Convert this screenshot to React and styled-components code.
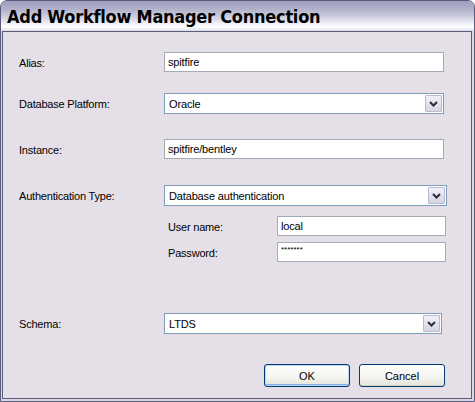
import styled, { createGlobalStyle } from "styled-components";

const colors = {
  frame: "#5b5b7b",
  body: "#e5e0e8",
  fieldBorder: "#a5acb5",
  selectBorder: "#7f9db9",
  buttonBorder: "#003c74",
};

const GlobalStyle = createGlobalStyle`
  html, body {
    margin: 0;
    padding: 0;
    background: #ffffff;
  }
  body {
    font-family: "Liberation Sans", Arial, sans-serif;
    font-size: 11px;
    color: #000;
  }
`;

function Chevron() {
  return (
    <svg width="9" height="6" viewBox="0 0 9 6">
      <path d="M1 1 L4.5 4.5 L8 1" fill="none" stroke="#2b2b3b" strokeWidth="2" />
    </svg>
  );
}

function Select({ value, $width }) {
  return (
    <SelectBox $width={$width}>
      <SelectValue>{value}</SelectValue>
      <DropButton>
        <Chevron />
      </DropButton>
    </SelectBox>
  );
}

export default function App() {
  return (
    <>
      <GlobalStyle />
      <Window>
        <TitleBar>Add Workflow Manager Connection</TitleBar>
        <Body>
          <Row $top={20}>
            <Label>Alias:</Label>
            <TextField $width={280}>spitfire</TextField>
          </Row>
          <Row $top={21}>
            <Label>Database Platform:</Label>
            <Select value="Oracle" $width={280} />
          </Row>
          <Row $top={25}>
            <Label>Instance:</Label>
            <TextField $width={280}>spitfire/bentley</TextField>
          </Row>
          <Row $top={26}>
            <Label>Authentication Type:</Label>
            <Select value="Database authentication" $width={283} />
          </Row>
          <SubRow $top={10}>
            <SubLabel>User name:</SubLabel>
            <TextField $width={169}>local</TextField>
          </SubRow>
          <SubRow $top={6}>
            <SubLabel>Password:</SubLabel>
            <TextField $width={169}>
              <Masked>*******</Masked>
            </TextField>
          </SubRow>
          <Row $top={51}>
            <Label>Schema:</Label>
            <Select value="LTDS" $width={278} />
          </Row>
          <ButtonBar>
            <Button $default>OK</Button>
            <Button>Cancel</Button>
          </ButtonBar>
        </Body>
      </Window>
    </>
  );
}

const Window = styled.div`
  box-sizing: border-box;
  width: 475px;
  height: 402px;
  display: flex;
  flex-direction: column;
  border: 1px solid ${colors.frame};
  border-radius: 7px 7px 0 0;
  background: #d9d7e4;
  overflow: hidden;
`;

const TitleBar = styled.div`
  height: 30px;
  flex: none;
  display: flex;
  align-items: center;
  padding: 1px 0 0 6px;
  box-sizing: border-box;
  font-family: "DejaVu Sans Condensed", "DejaVu Sans", sans-serif;
  font-stretch: condensed;
  font-weight: bold;
  font-size: 18px;
  letter-spacing: -0.25px;
  color: #000;
  background: linear-gradient(
    to bottom,
    #9d9dbd 0%,
    #b4b4cc 30%,
    #d8d8e6 60%,
    #fbfbfd 82%,
    #ffffff 86%,
    #dedde8 100%
  );
`;

const Body = styled.div`
  flex: 1;
  margin: 0 2px 2px 1px;
  border: 1px solid ${colors.frame};
  background: ${colors.body};
  padding-left: 16px;
  display: flex;
  flex-direction: column;
`;

const Row = styled.div`
  display: flex;
  align-items: center;
  margin-top: ${({ $top }) => $top}px;
`;

const SubRow = styled(Row)`
  padding-left: 149px;
`;

const Label = styled.div`
  width: 145px;
  flex: none;
  letter-spacing: -0.2px;
  padding-top: 1px;
`;

const SubLabel = styled(Label)`
  width: 109px;
`;

const TextField = styled.div`
  box-sizing: border-box;
  width: ${({ $width }) => $width}px;
  height: 20px;
  border: 1px solid ${colors.fieldBorder};
  background: #ffffff;
  padding: 0 3px;
  display: flex;
  align-items: center;
  letter-spacing: -0.15px;
`;

const Masked = styled.span`
  font-size: 8px;
  margin-top: -6px;
  letter-spacing: 0;
`;

const SelectBox = styled.div`
  box-sizing: border-box;
  width: ${({ $width }) => $width}px;
  height: 21px;
  border: 1px solid ${colors.selectBorder};
  background: #ffffff;
  display: flex;
  align-items: stretch;
`;

const SelectValue = styled.div`
  flex: 1;
  display: flex;
  align-items: center;
  padding-left: 4px;
  letter-spacing: -0.15px;
`;

const DropButton = styled.div`
  box-sizing: border-box;
  width: 17px;
  margin: 1px;
  border: 1px solid #b9b9cf;
  border-radius: 1px;
  background: linear-gradient(to bottom, #f0f0f6, #d6d6e4);
  display: flex;
  align-items: center;
  justify-content: center;
`;

const ButtonBar = styled.div`
  display: flex;
  justify-content: flex-end;
  gap: 9px;
  margin-top: 30px;
  padding-right: 26px;
`;

const Button = styled.div`
  box-sizing: border-box;
  width: 86px;
  height: 23px;
  border: 1px solid ${colors.buttonBorder};
  border-radius: 3px;
  background: linear-gradient(to bottom, #ffffff 0%, #f4f4f0 60%, #e3e3db 100%);
  box-shadow: ${({ $default }) =>
    $default ? "inset 0 0 0 1px #bcd4f6, inset 0 -1px 0 1px #89ade4" : "inset 0 -1px 0 #d6d0c5"};
  display: flex;
  align-items: center;
  justify-content: center;
  padding-top: 1px;
`;
